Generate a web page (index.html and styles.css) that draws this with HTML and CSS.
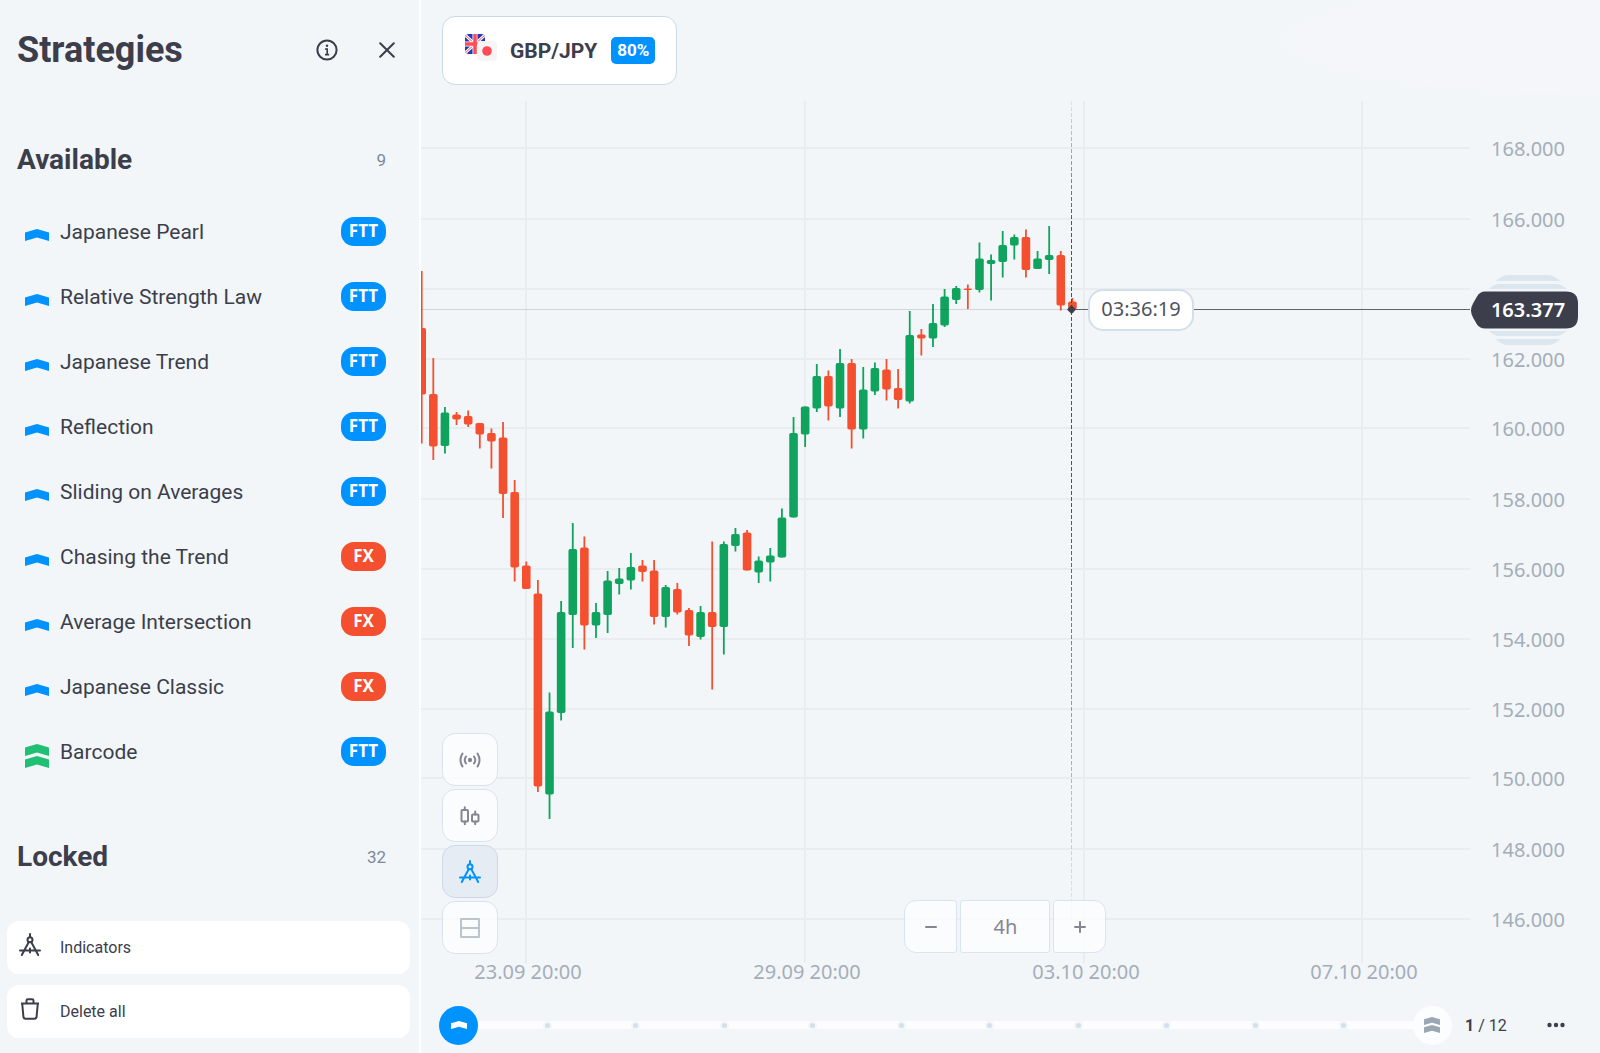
FILE: index.html
```html
<!DOCTYPE html>
<html lang="en">

<head>
    <meta charset="UTF-8" />
    <meta name="viewport" content="width=device-width, initial-scale=1.0" />
    <title>Strategies – GBP/JPY</title>
    <link rel="stylesheet" href="styles.css">
</head>

<body>
    <!-- shared icons -->
    <svg class="defs" aria-hidden="true">
        <symbol id="level1" viewBox="0 0 24 12">
            <path d="M0 3.5 12 0l12 3.5V12L12 8.5 0 12z" />
        </symbol>
        <symbol id="level2" viewBox="0 0 24 24">
            <path d="M0 3.5 12 0l12 3.5V12L12 8.5 0 12z" />
            <path d="M0 15.5 12 12l12 3.5V24L12 20.5 0 24z" />
        </symbol>
        <symbol id="compass" viewBox="0 0 22 24">
            <g fill="none" stroke="currentColor" stroke-width="2" stroke-linecap="round">
                <path d="M11 1v3M9.8 9 2.8 22M12.2 9l7 13M1 17.5h20M11 15.5v4" />
                <circle cx="11" cy="6.8" r="2.5" />
            </g>
        </symbol>
    </svg>

    <div class="app">
        <!-- left panel -->
        <aside class="sidebar">
            <header class="sidebar-head">
                <h1>Strategies</h1>
                <button class="icon-btn" aria-label="Info">
                    <svg width="22" height="22" viewBox="0 0 22 22" fill="none" stroke="currentColor" stroke-width="2">
                        <circle cx="11" cy="11" r="9.6" />
                        <path d="M9 10h2.2v5.6M9 15.6h4.2" stroke-width="1.6" />
                        <circle cx="11" cy="6.8" r="1.2" fill="currentColor" stroke="none" />
                    </svg>
                </button>
                <button class="icon-btn" aria-label="Close">
                    <svg width="16" height="16" viewBox="0 0 16 16" fill="none" stroke="currentColor" stroke-width="2" stroke-linecap="round">
                        <path d="M1.2 1.2l13.6 13.6M14.8 1.2 1.2 14.8" />
                    </svg>
                </button>
            </header>

            <div class="section-head">
                <h2>Available</h2>
                <span class="count">9</span>
            </div>
            <ul class="strategies">
                <li><svg class="level"><use href="#level1" /></svg><a href="#">Japanese Pearl</a><span class="tag">FTT</span></li>
                <li><svg class="level"><use href="#level1" /></svg><a href="#">Relative Strength Law</a><span class="tag">FTT</span></li>
                <li><svg class="level"><use href="#level1" /></svg><a href="#">Japanese Trend</a><span class="tag">FTT</span></li>
                <li><svg class="level"><use href="#level1" /></svg><a href="#">Reflection</a><span class="tag">FTT</span></li>
                <li><svg class="level"><use href="#level1" /></svg><a href="#">Sliding on Averages</a><span class="tag">FTT</span></li>
                <li><svg class="level"><use href="#level1" /></svg><a href="#">Chasing the Trend</a><span class="tag fx">FX</span></li>
                <li><svg class="level"><use href="#level1" /></svg><a href="#">Average Intersection</a><span class="tag fx">FX</span></li>
                <li><svg class="level"><use href="#level1" /></svg><a href="#">Japanese Classic</a><span class="tag fx">FX</span></li>
                <li><svg class="level double"><use href="#level2" /></svg><a href="#">Barcode</a><span class="tag">FTT</span></li>
            </ul>

            <div class="section-head">
                <h2>Locked</h2>
                <span class="count">32</span>
            </div>

            <div class="sidebar-actions">
                <button class="action">
                    <svg width="22" height="24"><use href="#compass" /></svg>
                    Indicators
                </button>
                <button class="action">
                    <svg width="22" height="24" viewBox="0 0 22 24" fill="none" stroke="currentColor" stroke-width="2" stroke-linejoin="round">
                        <path d="M2 6.5h18M3.2 6.5l1.2 13.2q.2 2 2.2 2h8.8q2 0 2.2-2L18.8 6.5M7.5 6V3.500q0-1.300 1.300-1.300h4.400q1.300 0 1.300 1.300V6" />
                    </svg>
                    Delete all
                </button>
            </div>
        </aside>

        <main class="trade">
            <header class="trade-head">
                <button class="pair">
                    <svg width="34" height="28" viewBox="0 0 34 28">
                        <clipPath id="uk"><rect width="20" height="20" rx="4" /></clipPath>
                        <g clip-path="url(#uk)">
                            <path d="M0 0h20v20H0z" fill="#2238b8" />
                            <path d="M0 1l20 18M20 1 0 19" stroke="#fff" stroke-width="3" />
                            <path d="M0 1l20 18M20 1 0 19" stroke="#ff4b55" stroke-width="1" />
                            <path d="M10 0v20M0 10h20" stroke="#fff" stroke-width="5" />
                            <path d="M10 0v20M0 10h20" stroke="#ff4b55" stroke-width="3.500" />
                        </g>
                        <rect x="12" y="7" width="20" height="20" rx="4" fill="#f5f5f5" />
                        <circle cx="22" cy="17" r="4.800" fill="#ff4b55" />
                    </svg>
                    <span class="pair-name">GBP/JPY</span>
                    <span class="payout">80%</span>
                </button>
            </header>

            <section class="chart">
                <svg id="plot" class="plot" viewBox="421 101 1179 884" role="img" aria-label="GBP/JPY candles">
                    <defs>
                        <linearGradient id="fade" gradientUnits="userSpaceOnUse" x1="0" y1="101" x2="0" y2="925">
                            <stop offset="0" stop-color="#3c3e4b" stop-opacity=".1" />
                            <stop offset=".15" stop-color="#3c3e4b" stop-opacity=".9" />
                            <stop offset=".5" stop-color="#3c3e4b" stop-opacity=".9" />
                            <stop offset="1" stop-color="#3c3e4b" stop-opacity=".05" />
                        </linearGradient>
                    </defs>
                    <g id="grid" class="grid"></g>
                    <g id="candles"></g>
                    <path class="level-line" d="M421 309.500H1071" />
                    <path class="price-line" d="M1071 309.500H1470" />
                    <path class="now-line" d="M1071.500 101V925" />
                    <path class="now-dot" d="M1071.500 305l4.500 4.500-4.500 4.500-4.500-4.500z" />
                    <rect class="timer-box" x="1089" y="290" width="104" height="40" rx="14" />
                    <text class="timer" x="1141" y="316">03:36:19</text>
                    <g class="stripes">
                        <path d="M1496 281q6-6 12-6h40q6 0 12 6zM1489 289q5-5 10-5h57q5 0 11 5zM1489 331h78q-6 5-11 5h-57q-5 0-10-5zM1496 339h64q-6 6-12 6h-40q-6 0-12-6z" />
                    </g>
                    <path class="price-tag" d="M1485 291.500h81q12 0 12 12v13q0 12-12 12h-81q-5 0-8-4l-4-7q-4-7 0-14l4-7q3-5 8-5z" />
                    <text class="price" x="1528" y="317">163.377</text>
                </svg>

                <!-- chart tools -->
                <div class="tools">
                    <button class="tool" aria-label="Signals">
                        <svg width="22" height="16" viewBox="0 0 22 16" fill="none" stroke="currentColor" stroke-width="2" stroke-linecap="round">
                            <circle cx="11" cy="8" r="2.200" fill="currentColor" stroke="none" />
                            <path d="M7 4.500q-2.500 3.500 0 7M3.500 1.500q-4 6.500 0 13M15 4.500q2.500 3.500 0 7M18.500 1.500q4 6.500 0 13" />
                        </svg>
                    </button>
                    <button class="tool" aria-label="Chart type">
                        <svg width="20" height="20" viewBox="0 0 20 20" fill="none" stroke="currentColor" stroke-width="2" stroke-linecap="round">
                            <rect x="1.500" y="4" width="6.500" height="11.500" rx="1" />
                            <rect x="12" y="8.500" width="6.500" height="7" rx="1" />
                            <path d="M4.800 1.200V4M4.800 15.500v2.700M15.200 5.500v3M15.200 15.500v2.700" />
                        </svg>
                    </button>
                    <button class="tool active" aria-label="Indicators">
                        <svg width="22" height="24"><use href="#compass" /></svg>
                    </button>
                    <button class="tool dim" aria-label="Layout">
                        <svg width="20" height="20" viewBox="0 0 20 20" fill="none" stroke="currentColor" stroke-width="2" stroke-linejoin="round">
                            <path d="M1 1h18v18H1zM1 10h18" />
                        </svg>
                    </button>
                </div>

                <!-- timeframe -->
                <div class="timeframe">
                    <button class="tool" aria-label="Zoom out">
                        <svg width="12" height="12" viewBox="0 0 12 12" stroke="currentColor" stroke-width="2" stroke-linecap="round"><path d="M1 6h10" /></svg>
                    </button>
                    <button class="tool frame">4h</button>
                    <button class="tool" aria-label="Zoom in">
                        <svg width="12" height="12" viewBox="0 0 12 12" stroke="currentColor" stroke-width="2" stroke-linecap="round"><path d="M1 6h10M6 1v10" /></svg>
                    </button>
                </div>
            </section>

            <footer class="progress">
                <div class="track">
                    <button class="step current" aria-label="Current level"><svg width="16" height="8"><use href="#level1" /></svg></button>
                    <span class="step"></span>
                    <span class="step"></span>
                    <span class="step"></span>
                    <span class="step"></span>
                    <span class="step"></span>
                    <span class="step"></span>
                    <span class="step"></span>
                    <span class="step"></span>
                    <span class="step"></span>
                    <span class="step"></span>
                    <button class="step next" aria-label="Next level"><svg width="16" height="16"><use href="#level2" /></svg></button>
                </div>
                <span class="steps-count"><b>1</b> / 12</span>
                <button class="more" aria-label="More">
                    <svg width="18" height="6" viewBox="0 0 18 6" fill="currentColor">
                        <circle cx="2.500" cy="3" r="2.200" />
                        <circle cx="9" cy="3" r="2.200" />
                        <circle cx="15.500" cy="3" r="2.200" />
                    </svg>
                </button>
            </footer>
        </main>
    </div>

    <script src="chart.js"></script>
</body>

</html>
```
FILE: styles.css
```css
* {
    box-sizing: border-box;
}

body {
    margin: 0;
    font-family: Roboto, sans-serif;
    background-color: #f2f6f9;
    color: #3c3e4b;
}

button {
    font: inherit;
    color: inherit;
    border: none;
    background: none;
    padding: 0;
    cursor: pointer;
}

svg {
    flex-shrink: 0;
}

.defs {
    position: absolute;
    width: 0;
    height: 0;
}

.app {
    display: flex;
    min-height: 100vh;
}

/* left panel */
.sidebar {
    display: flex;
    flex-direction: column;
    flex: 0 0 421px;
    border-right: 2px solid #fcfdfe;
}

.sidebar-head {
    display: flex;
    align-items: center;
    height: 100px;
    margin-bottom: 20px;
    padding: 0 16px 0 17px;
}

.sidebar-head h1 {
    flex: 1;
    margin: 0;
    font-size: 36px;
}

.icon-btn {
    display: flex;
    align-items: center;
    justify-content: center;
    width: 32px;
    height: 32px;
    margin-left: 28px;
}

.section-head {
    display: flex;
    align-items: center;
    justify-content: space-between;
    height: 79px;
    padding: 0 33px 0 17px;
}

.section-head h2 {
    margin: 0;
    font-size: 28px;
}

.count {
    font-size: 17px;
    color: #7b8a9a;
}

.strategies {
    list-style: none;
    margin: 0 0 33px;
    padding: 0 33px 0 25px;
}

.strategies li {
    display: flex;
    align-items: center;
    height: 65px;
}

.strategies a {
    flex: 1;
    font-size: 21px;
    color: inherit;
    text-decoration: none;
}

.level {
    width: 24px;
    height: 12px;
    margin: 6px 11px 0 0;
    fill: #0093ff;
}

.level.double {
    height: 24px;
    margin-top: 8px;
    fill: #1fc074;
}

.tag {
    width: 45px;
    height: 29px;
    border-radius: 13px;
    background-color: #0093ff;
    color: #fff;
    font: bold 17px/28px "Noto Sans", sans-serif;
    text-align: center;
}

.tag.fx {
    background-color: #f4502f;
}

.sidebar-actions {
    display: flex;
    flex-direction: column;
    gap: 11px;
    margin-top: auto;
    padding: 0 9px 15px 7px;
}

.action {
    display: flex;
    align-items: center;
    gap: 19px;
    height: 53px;
    padding: 0 12px;
    border-radius: 12px;
    background-color: #fff;
    font-size: 16px;
}

.action svg {
    margin-bottom: 6px;
}

/* right side */
.trade {
    display: flex;
    flex-direction: column;
    flex: 1;
    min-width: 0;
}

.trade-head {
    height: 101px;
    padding: 16px 21px;
    background: radial-gradient(ellipse 340px 60px at right 40px, #f5f6fa 80%, #f2f6f9);
}

.pair {
    display: flex;
    align-items: center;
    height: 69px;
    padding: 0 21px 0 22px;
    border: 1px solid #cbd9e7;
    border-radius: 13px;
    background-color: #fff;
}

.pair svg {
    margin: 0 11px 6px 0;
}

.pair-name {
    margin-right: 14px;
    font-size: 21px;
    font-weight: bold;
}

.payout {
    padding: 0 6px;
    border-radius: 5px;
    background-color: #0093ff;
    color: #fff;
    font-size: 17px;
    font-weight: bold;
    line-height: 27px;
}

.chart {
    position: relative;
}

.plot {
    display: block;
    width: 100%;
    height: auto;
    font-family: "Noto Sans", sans-serif;
    font-size: 20px;
    text-anchor: middle;
}

.grid path {
    stroke: #e9edf0;
    stroke-width: 2;
}

.grid text {
    fill: #a4aeb8;
}

.up {
    fill: #0fa35d;
}

.down {
    fill: #f4502f;
}

.level-line {
    stroke: #3c3e4b;
    stroke-opacity: .18;
}

.price-line {
    stroke: #3c3e4b;
    stroke-opacity: .8;
}

.now-line {
    stroke: url(#fade);
    stroke-width: 1;
    stroke-dasharray: 4 2;
}

.now-dot,
.price-tag {
    fill: #3c3e4b;
}

.timer-box {
    fill: #fff;
    stroke: #d3dfeb;
    stroke-width: 2;
}

.timer {
    fill: #50525d;
}

.stripes {
    fill: #dce6ee;
}

.price {
    fill: #fff;
    font-weight: 600;
}

/* chart overlays */
.tools {
    position: absolute;
    left: 21px;
    bottom: 31px;
    display: flex;
    flex-direction: column;
    gap: 3px;
}

.tool {
    display: flex;
    align-items: center;
    justify-content: center;
    width: 56px;
    height: 53px;
    border: 1px solid #d9e4ee;
    border-radius: 13px;
    background-color: rgba(255, 255, 255, 0.7);
    color: #858693;
}

.tool.active {
    border-color: #cbd9e7;
    background-color: #e6ecf4;
    color: #0093ff;
}

.tool.dim {
    color: #bcc4cc;
}

.timeframe {
    position: absolute;
    left: 41%;
    bottom: 32px;
    display: flex;
    gap: 3px;
}

.timeframe .tool {
    width: 53px;
    border-radius: 12px 3px 3px 12px;
}

.timeframe .tool:last-child {
    border-radius: 3px 12px 12px 3px;
}

.timeframe .frame {
    width: 90px;
    border-radius: 3px;
    font-family: "Noto Sans", sans-serif;
    font-size: 20px;
}

/* level progress */
.progress {
    display: flex;
    align-items: center;
    flex: 1;
    padding: 12px 32px 0 18px;
}

.track {
    display: flex;
    justify-content: space-between;
    flex: 1;
    background: linear-gradient(#fcfdfe, #fcfdfe) center / 100% 8px no-repeat;
}

.step {
    display: flex;
    align-items: center;
    justify-content: center;
    width: 39px;
    height: 39px;
    border-radius: 50%;
}

.step::before {
    content: "";
    width: 5px;
    height: 5px;
    border: 2px solid #f2f6f9;
    border-radius: 50%;
    background-color: #d5e0ea;
}

.current::before,
.next::before {
    display: none;
}

.current {
    background-color: #0093ff;
    fill: #fff;
}

.next {
    background-color: #fcfdfe;
    fill: #9ba7b2;
}

.steps-count {
    width: 79px;
    margin-left: 13px;
    font-size: 16px;
}

.more {
    display: flex;
    align-items: center;
    justify-content: center;
    width: 24px;
    height: 24px;
}
```
FILE: chart.js
```javascript
const STEP = 11.62;
const START = 421.7;

// [color, high, top, bottom, low]
const candles = [
    ["down", 271, 328, 394.5, 443.5],
    ["down", 358, 394, 446.5, 460],
    ["up", 407, 412.5, 446, 453.5],
    ["down", 412, 414.5, 419.5, 425],
    ["down", 410.5, 416, 424.5, 427],
    ["down", 423, 423, 434.5, 448.5],
    ["down", 428.5, 433, 441.5, 468.5],
    ["down", 422, 437.5, 494, 518],
    ["down", 480, 492, 567.5, 581.5],
    ["down", 561.5, 565.5, 589, 589],
    ["down", 580, 593.5, 786.5, 792],
    ["up", 692.5, 711.5, 794.5, 819],
    ["up", 601, 612, 713, 720.5],
    ["up", 523, 549, 615, 648],
    ["down", 536.5, 547.5, 625.5, 649.5],
    ["up", 603, 612, 625.5, 638],
    ["up", 571, 580.5, 615, 633],
    ["up", 568, 578.5, 584, 594.5],
    ["up", 553, 567, 580.5, 589.5],
    ["down", 560, 565.5, 572, 581.5],
    ["down", 560, 570.5, 617, 624.5],
    ["up", 585, 587, 617, 627.5],
    ["down", 583, 589, 612.5, 614.5],
    ["down", 608, 610, 635.5, 646],
    ["up", 606, 612, 637, 639.5],
    ["down", 541.5, 612, 627, 689.5],
    ["up", 541.5, 544, 627, 654.5],
    ["up", 528, 534, 546, 551.5],
    ["down", 530, 532.5, 570.5, 570.5],
    ["up", 556.5, 560.5, 572.5, 583],
    ["up", 548, 555.5, 562.5, 581.5],
    ["up", 508.5, 517.5, 557.5, 557.5],
    ["up", 417, 433, 517.5, 517.5],
    ["up", 406.5, 406.5, 434.5, 447],
    ["up", 364, 376, 408.5, 412],
    ["down", 370.5, 376, 406.5, 420.5],
    ["up", 349, 363, 408.5, 417],
    ["down", 359, 363, 429.5, 448.5],
    ["up", 367, 389.5, 429.5, 438.5],
    ["up", 362.5, 368, 391.5, 395],
    ["down", 359, 369.5, 389.5, 400.5],
    ["down", 369, 388, 400, 408.5],
    ["up", 311, 335, 401.5, 403.5],
    ["down", 329, 334.5, 338.5, 355.5],
    ["up", 304, 323, 338.5, 347],
    ["up", 289, 296.5, 325.5, 327],
    ["up", 286, 288, 300, 304],
    ["down", 284.5, 288.5, 290, 309],
    ["up", 242.5, 258.5, 290, 292.5],
    ["up", 254.5, 260, 264, 300.5],
    ["up", 231, 245, 262, 277.5],
    ["up", 234.5, 237, 245.5, 259.5],
    ["down", 229.5, 237, 270, 277.5],
    ["up", 251, 258.5, 269, 269],
    ["up", 226, 255, 260, 274],
    ["down", 251, 255, 305.5, 310.5],
    ["down", 298, 301.5, 309.5, 313]
];

const prices = [
    [148, "168.000"], [219, "166.000"], [289, ""], [359, "162.000"],
    [428, "160.000"], [499, "158.000"], [569, "156.000"], [639, "154.000"],
    [709, "152.000"], [778, "150.000"], [849, "148.000"], [919, "146.000"]
];

const times = [
    [526, "23.09 20:00"], [805, "29.09 20:00"], [1084, "03.10 20:00"], [1362, "07.10 20:00"]
];

let grid = "";
for (const [y, label] of prices) {
    grid += `<path d="M421 ${y}H1470" />`;
    if (label) grid += `<text x="1528" y="${y + 8}">${label}</text>`;
}
for (const [x, label] of times) {
    grid += `<path d="M${x} 101V963" /><text x="${x + 2}" y="979">${label}</text>`;
}
document.getElementById("grid").innerHTML = grid;

document.getElementById("candles").innerHTML = candles.map(([color, high, top, bottom, low], i) => {
    const x = START + STEP * i;
    return `<g class="${color}">
        <rect x="${x - 0.9}" y="${high}" width="1.8" height="${low - high}" />
        <rect x="${x - 4.3}" y="${top}" width="8.6" height="${bottom - top}" rx="1.8" />
    </g>`;
}).join("");
```
